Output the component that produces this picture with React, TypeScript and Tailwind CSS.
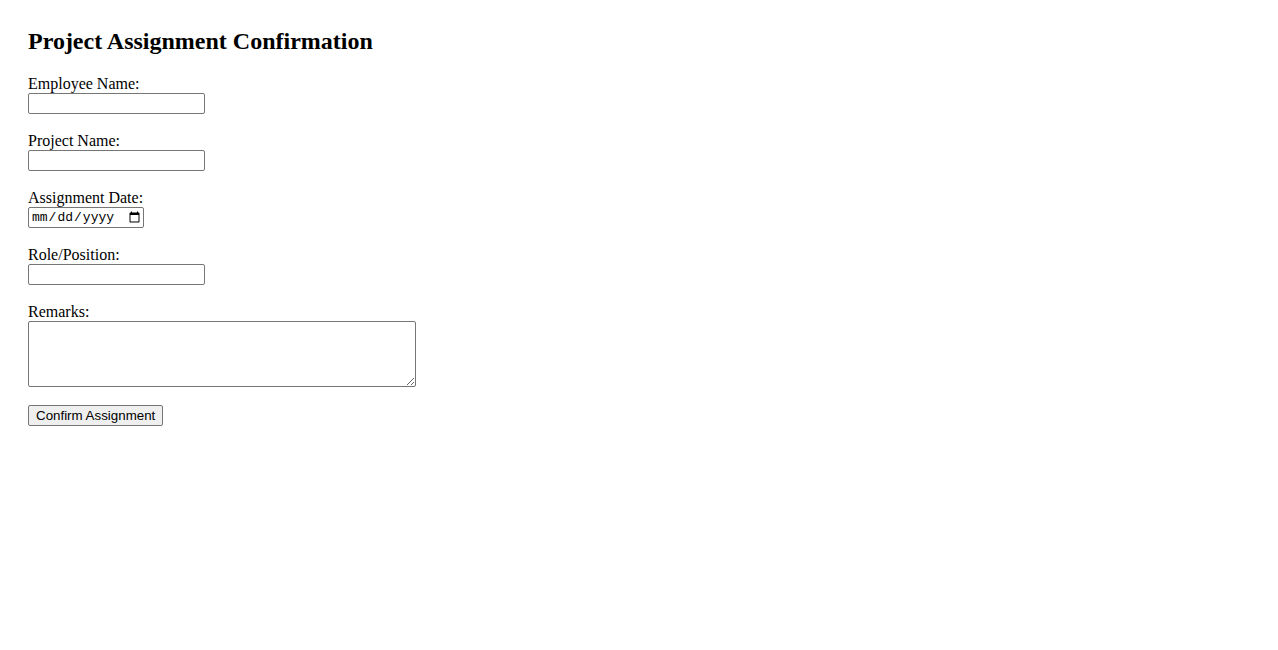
import React from 'react';

const serif = { fontFamily: '"Liberation Serif", "Times New Roman", serif' };

function Field({ label, children }: { label: string; children: React.ReactNode }) {
  return (
    <div className="flex flex-col items-start mb-[18px]">
      <label className="block text-[16px] leading-[18px] text-black">{label}</label>
      {children}
    </div>
  );
}

const inputCls =
  'h-[21px] w-[177px] border border-[#767676] rounded-[2px] bg-white px-[2px] text-[13px] outline-none';

export default function App() {
  return (
    <div className="min-h-screen bg-white pt-[28px] px-[28px] text-black" style={serif}>
      <h2 className="text-[24px] leading-[27px] font-bold mb-[20px]">Project Assignment Confirmation</h2>

      <form onSubmit={e => e.preventDefault()}>
        <Field label="Employee Name:">
          <input type="text" className={inputCls} />
        </Field>
        <Field label="Project Name:">
          <input type="text" className={inputCls} />
        </Field>
        <Field label="Assignment Date:">
          <input
            type="date"
            className="h-[21px] w-[116px] border border-[#767676] rounded-[2px] bg-white pl-[2px] text-[13px] outline-none font-['Liberation_Mono',monospace]"
          />
        </Field>
        <Field label="Role/Position:">
          <input type="text" className={inputCls} />
        </Field>
        <Field label="Remarks:">
          <textarea className="block h-[66px] w-[388px] border border-[#767676] rounded-[2px] bg-white p-[2px] text-[13px] outline-none font-['Liberation_Mono',monospace]" />
        </Field>
        <button
          type="submit"
          className="block h-[21px] px-[7px] border border-[#767676] rounded-[2px] bg-[#efefef] text-[13.33px] leading-[17px] font-['Liberation_Sans',Arial,sans-serif]"
        >
          Confirm Assignment
        </button>
      </form>
    </div>
  );
}
